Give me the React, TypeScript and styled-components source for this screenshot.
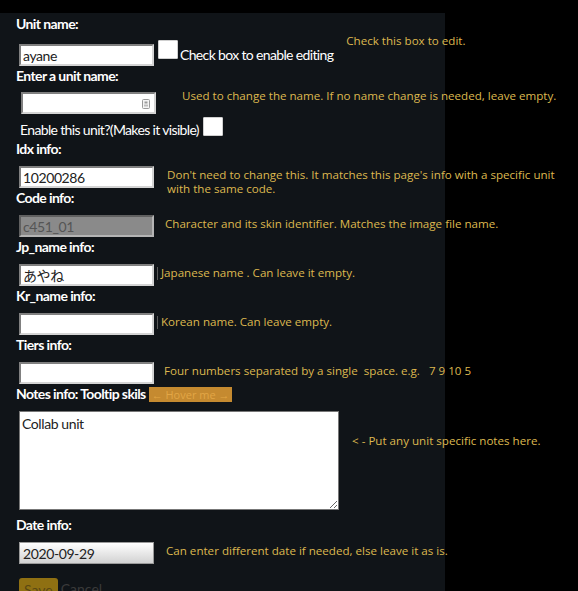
import React from "react";
import styled, { createGlobalStyle } from "styled-components";

const Global = createGlobalStyle`
  html, body { margin: 0; padding: 0; background: #000; overflow: hidden; }
  body { font-family: Lato, "Liberation Sans", sans-serif; }
`;

const Page = styled.div`
  padding-top: 13px;
`;

const Panel = styled.div`
  width: 445px;
  min-height: 578px;
  background: #101418;
  box-sizing: border-box;
  padding: 3px 0 0 16px;
  display: flex;
  flex-direction: column;
  align-items: flex-start;
`;

const Label = styled.div<{ $mt?: number }>`
  font-family: Lato, "Liberation Sans", sans-serif;
  font-weight: 700;
  font-size: 14px;
  line-height: 16px;
  letter-spacing: -0.6px;
  color: #fff;
  margin-top: ${(p) => p.$mt ?? 0}px;
  display: flex;
  align-items: center;
  white-space: nowrap;
`;

const Row = styled.div<{ $mt?: number; $ml?: number; $h?: number }>`
  display: flex;
  align-items: flex-start;
  margin-top: ${(p) => p.$mt ?? 0}px;
  margin-left: ${(p) => p.$ml ?? 0}px;
  height: ${(p) => (p.$h ? `${p.$h}px` : "auto")};
  white-space: nowrap;
`;

const TextInput = styled.input<{ $mt?: number; $ml?: number }>`
  box-sizing: border-box;
  width: 135px;
  height: 22px;
  flex: none;
  margin: ${(p) => p.$mt ?? 0}px 0 0 ${(p) => p.$ml ?? 3}px;
  padding: 0 2px;
  border: 2px inset #d4d4d4;
  background: #fff;
  font-family: Lato, "Noto Sans CJK JP", sans-serif;
  font-size: 14px;
  letter-spacing: -0.4px;
  color: #222;
  outline: none;
  &:disabled {
    background: #8a8a8a;
    border-color: #b4b4b4;
    color: #555;
  }
`;

const DateInput = styled(TextInput)`
  background: linear-gradient(#ffffff, #d2d2d2);
  border: 1px solid #9a9a9a;
  padding: 0 3px;
`;

const InputWrap = styled.div<{ $mt?: number; $ml?: number }>`
  position: relative;
  flex: none;
  margin: ${(p) => p.$mt ?? 0}px 0 0 ${(p) => p.$ml ?? 3}px;
`;

const AutoIcon = styled.svg`
  position: absolute;
  right: 6px;
  top: 7px;
`;

const Check = styled.input<{ $mt?: number; $ml?: number }>`
  appearance: none;
  -webkit-appearance: none;
  box-sizing: border-box;
  flex: none;
  width: 20px;
  height: 19px;
  margin: ${(p) => p.$mt ?? 0}px 0 0 ${(p) => p.$ml ?? 0}px;
  background: #fff;
  border: 1px solid #cfcfcf;
  border-radius: 1px;
`;

const Plain = styled.span<{ $mt?: number; $ml?: number }>`
  font-family: Lato, "Liberation Sans", sans-serif;
  font-size: 14px;
  line-height: 16px;
  letter-spacing: -0.65px;
  color: #fff;
  margin: ${(p) => p.$mt ?? 0}px 0 0 ${(p) => p.$ml ?? 0}px;
`;

const Hint = styled.div<{ $mt?: number; $ml?: number; $w?: number }>`
  font-family: "Open Sans", "DejaVu Sans", sans-serif;
  font-size: 11.6px;
  line-height: 14px;
  color: #ddb84f;
  margin: ${(p) => p.$mt ?? 2}px 0 0 ${(p) => p.$ml ?? 12}px;
  white-space: ${(p) => (p.$w ? "normal" : "pre")};
  width: ${(p) => (p.$w ? `${p.$w}px` : "auto")};
  flex: none;
  display: flex;
  align-items: center;
`;

const Bar = styled.span`
  display: inline-block;
  width: 1px;
  height: 13px;
  background: #5a5a5a;
  margin-right: 3px;
`;

const HoverBtn = styled.span`
  display: inline-block;
  margin-left: 3px;
  padding: 0 3px;
  height: 15px;
  line-height: 15px;
  background: #c58a30;
  color: #e2a645;
  font-family: "Open Sans", sans-serif;
  font-weight: 400;
  font-size: 11px;
  letter-spacing: 0;
`;

const Notes = styled.textarea`
  box-sizing: border-box;
  flex: none;
  width: 320px;
  height: 99px;
  margin-left: 3px;
  padding: 3px 2px;
  border: 1px solid #777;
  background: #fff;
  font-family: Lato, sans-serif;
  font-size: 14px;
  letter-spacing: -0.4px;
  color: #222;
  outline: none;
  resize: both;
`;

const Actions = styled.div`
  display: flex;
  align-items: flex-start;
  margin: 14px 0 0 3px;
`;

const SaveBtn = styled.button`
  background: #8f7012;
  border: none;
  border-radius: 3px;
  color: #5a4812;
  font-family: Lato, sans-serif;
  font-size: 14px;
  line-height: 16px;
  padding: 3px 5px;
  height: 24px;
`;

const CancelLink = styled.span`
  font-family: Lato, sans-serif;
  font-size: 14px;
  line-height: 16px;
  padding-top: 3px;
  color: #3a3a3a;
  margin-left: 3px;
`;

export default function App() {
  return (
    <Page>
      <Global />
      <Panel>
        <Label>Unit name:</Label>
        <Row $mt={2}>
          <TextInput $mt={10} defaultValue="ayane" />
          <Check type="checkbox" $mt={6} $ml={4} />
          <Plain $mt={13} $ml={2}>Check box to enable editing</Plain>
          <Hint $mt={0} $ml={13}>Check this box to edit.</Hint>
        </Row>
        <Label $mt={2}>Enter a unit name:</Label>
        <Row $mt={5}>
          <InputWrap $mt={3} $ml={5}>
            <TextInput $ml={0} />
            <AutoIcon width="8" height="10" viewBox="0 0 8 10">
              <rect x="0.5" y="0.5" width="7" height="9" rx="1" fill="#f4f4f4" stroke="#9a9a9a" />
              <rect x="2.5" y="2.5" width="3" height="2" fill="#9a9a9a" />
              <rect x="2" y="5.5" width="4" height="2" fill="#bdbdbd" />
            </AutoIcon>
          </InputWrap>
          <Hint $mt={0} $ml={26}>Used to change the name. If no name change is needed, leave empty.</Hint>
        </Row>
        <Row $mt={2} $ml={4}>
          <Plain $mt={6}>Enable this unit?(Makes it visible)</Plain>
          <Check type="checkbox" $mt={1} $ml={4} />
        </Row>
        <Label $mt={3}>Idx info:</Label>
        <Row $mt={9} $h={22}>
          <TextInput defaultValue="10200286" />
          <Hint $ml={13} $w={400}>
            Don't need to change this. It matches this page's info with a specific unit with the same code.
          </Hint>
        </Row>
        <Label $mt={2}>Code info:</Label>
        <Row $mt={9} $h={22}>
          <TextInput defaultValue="c451_01" disabled />
          <Hint $ml={11}>Character and its skin identifier. Matches the image file name.</Hint>
        </Row>
        <Label $mt={2}>Jp_name info:</Label>
        <Row $mt={9} $h={22}>
          <TextInput defaultValue="あやね" />
          <Hint $ml={3}>
            <Bar />
            Japanese name . Can leave it empty.
          </Hint>
        </Row>
        <Label $mt={2}>Kr_name info:</Label>
        <Row $mt={9} $h={22}>
          <TextInput />
          <Hint $ml={3}>
            <Bar />
            Korean name. Can leave empty.
          </Hint>
        </Row>
        <Label $mt={2}>Tiers info:</Label>
        <Row $mt={9} $h={22}>
          <TextInput />
          <Hint $ml={10}>Four numbers separated by a single  space. e.g.   7 9 10 5</Hint>
        </Row>
        <Label $mt={2}>
          Notes info: Tooltip skils
          <HoverBtn>← Hover me →</HoverBtn>
        </Label>
        <Row $mt={9} $h={99}>
          <Notes defaultValue="Collab unit" />
          <Hint $mt={23} $ml={13}>&lt; - Put any unit specific notes here.</Hint>
        </Row>
        <Label $mt={7}>Date info:</Label>
        <Row $mt={9} $h={22}>
          <DateInput defaultValue="2020-09-29" />
          <Hint $ml={12}>Can enter different date if needed, else leave it as is.</Hint>
        </Row>
        <Actions>
          <SaveBtn>Save</SaveBtn>
          <CancelLink>Cancel</CancelLink>
        </Actions>
      </Panel>
    </Page>
  );
}
